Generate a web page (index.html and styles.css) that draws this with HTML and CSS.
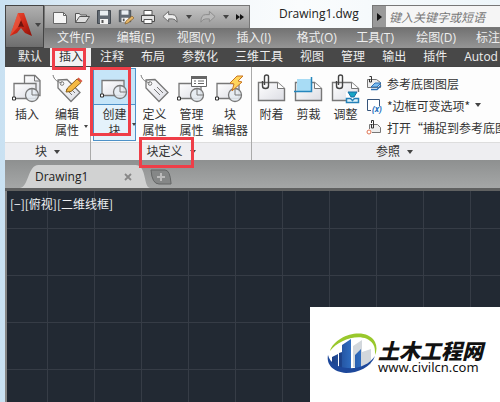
FILE: index.html
```html
<!DOCTYPE html>
<html lang="zh-CN">
<head>
<meta charset="utf-8">
<title>Drawing1.dwg</title>
<link rel="stylesheet" href="styles.css">
</head>
<body>
<svg class="defs" aria-hidden="true">
  <defs>
    <linearGradient id="red" x1="0" y1="0" x2="1" y2="1"><stop offset="0" stop-color="#f0563c"/><stop offset=".5" stop-color="#d02a18"/><stop offset="1" stop-color="#8c1008"/></linearGradient>
    <linearGradient id="paper" x1="0" y1="0" x2="1" y2="1"><stop offset="0" stop-color="#fff"/><stop offset="1" stop-color="#dcdde4"/></linearGradient>
    <linearGradient id="tower" x1="0" y1="0" x2="1" y2="0"><stop offset="0" stop-color="#1c3f86"/><stop offset="1" stop-color="#2e6cc0"/></linearGradient>
    <symbol id="block" viewBox="0 0 30 30">
      <path d="M2 9.500h22v15H2z" fill="url(#paper)" stroke="#777" stroke-width="1.300"/>
      <circle cx="20" cy="21" r="6.500" fill="#e8edf3" fill-opacity=".85" stroke="#777" stroke-width="1.300"/>
      <path d="M20 15v6h6.500" fill="none" stroke="#777"/>
      <path d="M.5 23h3v3h-3z" fill="#fff" stroke="#333"/>
    </symbol>
    <symbol id="tag" viewBox="0 0 30 30">
      <path d="M6 6l9-.5 13 13-9 9L6 14z" fill="url(#paper)" stroke="#777" stroke-width="1.300"/>
      <circle cx="10" cy="9.500" r="1.800" fill="#fff" stroke="#777"/>
      <path d="M10 9C6 8 2 6 1 1M14 15l6 6M17 13l6 6" fill="none" stroke="#777"/>
    </symbol>
    <symbol id="sheet" viewBox="0 0 30 30">
      <path d="M1.500 8.500h19l7 6v12h-26z" fill="url(#paper)" stroke="#777" stroke-width="1.400"/>
      <path d="M20.500 8.500v6h7" fill="#fff" stroke="#777"/>
    </symbol>
    <symbol id="clip" viewBox="0 0 30 30">
      <path d="M5.500 7v5q0 2.500 3 2.500t3-2.500V2.500Q11.500 1 9.500 1T7.500 3v8" fill="none" stroke="#444" stroke-width="1.400"/>
    </symbol>
    <symbol id="floppy" viewBox="0 0 16 16">
      <path d="M1.500 1.500h13v13h-13z" fill="#626a73" stroke="#434950"/>
      <path d="M4 1.500h8v5H4z" fill="#e9eef2"/><path d="M4 10h8v5H4z" fill="#f3f3f3"/><path d="M5.500 11h2v3h-2z" fill="#555"/>
    </symbol>
    <symbol id="arrow" viewBox="0 0 18 16">
      <path d="M1 7.500L7 2v3.500h4q5 0 5 8-2-3.500-5-3.500H7V13z" stroke-linejoin="round"/>
    </symbol>
  </defs>
</svg>
<div class="window">
  <header class="titlearea">
    <button class="app" aria-label="应用程序菜单">
      <svg width="24" height="26" viewBox="0 0 24 26"><path d="M9 1h6l8 23-7-3-4-5-4 5-7 3z" fill="url(#red)"/><path d="M12 8l3 7q-3-1-6 0z" fill="#6f150e"/><path d="M9 1l3 7-3 7-8 9z" fill="#ef6048" opacity=".6"/></svg>
      <i class="caret"></i>
    </button>
    <div class="titlebar">
      <div class="quick">
        <button aria-label="新建"><svg width="16" height="16"><path d="M1.500 3.500h10l3 3v8h-13z" fill="#f5f5f5" stroke="#666"/><path d="M11.500 3.500v3h3" fill="none" stroke="#666"/></svg></button>
        <button aria-label="打开"><svg width="16" height="16"><path d="M1.500 13.500v-9h4l1 1.500h6v2" fill="#eee" stroke="#555"/><path d="M1.500 13.500l4-6h10l-4 6z" fill="#ddd" stroke="#555"/></svg></button>
        <button aria-label="保存"><svg width="16" height="16"><use href="#floppy"/></svg></button>
        <button aria-label="另存为"><svg width="16" height="16"><use href="#floppy" width="14" height="14"/><path d="M7 15l1-3 6-5 2 2-6 5z" fill="#e4b567" stroke="#84602e" stroke-width=".7"/></svg></button>
        <button aria-label="打印"><svg width="16" height="16"><path d="M4 1.500h8V6H4z" fill="#fff" stroke="#555"/><path d="M1.500 6.500h13v6h-13z" fill="#e4e4e4" stroke="#4a4a4a"/><path d="M4 10.500h8v4H4z" fill="#fff" stroke="#555"/></svg></button>
        <button aria-label="放弃"><svg width="17" height="16" fill="#eee" stroke="#666"><use href="#arrow"/></svg></button>
        <button class="drop" aria-label="放弃列表"><i class="caret"></i></button>
        <button aria-label="重做"><svg class="flip" width="17" height="16" fill="#b9b9b9" stroke="#8a8a8a"><use href="#arrow"/></svg></button>
        <button class="drop" aria-label="重做列表"><i class="caret"></i></button>
        <button class="drop" aria-label="更多"><svg width="9" height="6"><path d="M0 0l4 3-4 3zM4 0l4 3-4 3z" fill="#111"/></svg></button>
      </div>
      <h1>Drawing1.dwg</h1>
      <div class="search">
        <button aria-label="展开搜索"><svg width="5" height="8"><path d="M0 0l5 4-5 4z" fill="#111"/></svg></button>
        <input type="text" aria-label="搜索" placeholder="键入关键字或短语">
      </div>
    </div>
    <nav class="menu">
      <a href="#">文件(F)</a><a href="#">编辑(E)</a><a href="#">视图(V)</a><a href="#">插入(I)</a><a href="#">格式(O)</a><a href="#">工具(T)</a><a href="#">绘图(D)</a><a href="#">标注</a>
    </nav>
  </header>
  <nav class="tabs">
    <a href="#">默认</a><a href="#" class="active">插入<span class="mark mark-tab"></span></a><a href="#">注释</a><a href="#">布局</a><a href="#">参数化</a><a href="#">三维工具</a><a href="#">视图</a><a href="#">管理</a><a href="#">输出</a><a href="#">插件</a><a href="#">Autod</a>
  </nav>
  <main>
    <div class="ribbon">
      <section class="panel panel-block">
        <div class="tools">
          <button class="tool"><svg width="30" height="30"><path d="M12.500 1.500H23l5 5v15H12.500z" fill="url(#paper)" stroke="#777" stroke-width="1.300"/><path d="M22.500 1.500V7H28" fill="none" stroke="#777"/><use href="#block"/></svg>插入</button>
          <button class="tool"><svg width="30" height="30"><use href="#tag"/><path d="M14 18l1.500-4L25 5l4 3.500-10 9z" fill="#f5b942" stroke="#8d6217"/><path d="M25 5l1.500-1.500 4 3.500L29 8.500z" fill="#d95a44"/></svg>编辑<br>属性<i class="caret corner"></i></button>
        </div>
        <h2>块<i class="caret"></i></h2>
      </section>
      <section class="panel panel-define">
        <div class="tools">
          <button class="tool selected"><svg width="30" height="30" viewBox="0 3 30 30"><use href="#block" width="30" height="30"/></svg><span>创建<br>块</span><i class="caret corner"></i><span class="mark mark-create"></span></button>
          <button class="tool"><svg width="30" height="30"><use href="#tag"/></svg>定义<br>属性</button>
          <button class="tool"><svg width="30" height="30"><use href="#block"/><path d="M14.500 2.500h15v10h-15z" fill="#fff" stroke="#666"/><path d="M14 2h16v3H14z" fill="#666"/><path d="M17 7h2M21 7h6M17 9.500h2M21 9.500h6" stroke="#666"/></svg>管理<br>属性</button>
          <button class="tool"><svg width="30" height="30"><use href="#block"/><path d="M22 2l-7 7 4 1-2 7 10-9-4-1 5-5z" fill="#ffd45b" stroke="#c97522"/></svg>块<br>编辑器</button>
        </div>
        <h2><span class="marked">块定义<span class="mark mark-title"></span></span><i class="caret"></i></h2>
      </section>
      <section class="panel panel-reference">
        <div class="tools">
          <button class="tool"><svg width="30" height="30"><use href="#sheet"/><use href="#clip"/></svg>附着</button>
          <button class="tool"><svg width="30" height="30"><use href="#sheet"/><path d="M3 5h14v12H3z" fill="#a8dcf5"/><path d="M0 17.500h17.500V3" fill="none" stroke="#2586bd" stroke-width="1.500"/></svg>剪裁</button>
          <button class="tool"><svg width="30" height="30"><use href="#sheet"/><use href="#clip"/><path d="M15 18h14v10H15z" fill="#fff"/><path d="M17 18h9l-3 5h-3z" fill="#17a5c4" stroke="#176ca5"/><path d="M15.500 24.500h4l2 2 2-2h4v4h-12z" fill="#dff4fc" stroke="#2581b8" stroke-width="1.500"/></svg>调整</button>
          <div class="list">
            <button><svg width="16" height="16"><path d="M1.500 4.500h9l4 3v5h-13z" fill="#eee" stroke="#777"/><path d="M3.500 4v3h2V1.500h-2" fill="none" stroke="#333"/><path d="M5 12l4-4h6l-4 4z" fill="#7bbdf0" stroke="#2a6fb5"/><path d="M5 14.500h6l4-4" fill="none" stroke="#2a6fb5" stroke-width="1.500"/></svg>参考底图图层</button>
            <button><svg width="16" height="16"><path d="M5 13.500H1.500V2.500h12v7" fill="#fff" stroke="#36547b"/><text x="6" y="15" class="fx">(x)</text></svg>*边框可变选项*<i class="caret"></i></button>
            <button><svg width="16" height="16"><path d="M3.500 10V5.500h8l3 3v5H6" fill="#eee" stroke="#777"/><path d="M5.500 5v4h2V1.500h-2V4" fill="none" stroke="#333"/><circle cx="3" cy="13" r="2" fill="#fff" stroke="#e07452"/></svg>打开“捕捉到参考底图</button>
          </div>
        </div>
        <h2>参照<i class="caret"></i></h2>
      </section>
    </div>
    <div class="files">
      <div class="file">
        <svg class="fileshape" viewBox="0 0 134 25" preserveAspectRatio="none"><path d="M0 25C9 24 8 0 19 0h100c12 0 8 24 15 25z"/></svg>
        <a href="#">Drawing1</a><button aria-label="关闭"><svg width="8" height="8"><path d="M1 1l6 6M7 1L1 7" stroke="#888" stroke-width="1.800"/></svg></button>
      </div>
      <button class="add" aria-label="新图形"><svg width="22" height="16"><path d="M1 1h14q5 0 6 13v1H9Q2 15 1 1z" fill="#858787" stroke="#646666"/><path d="M11 4v8M7 8h8" stroke="#bbb" stroke-width="2"/></svg></button>
    </div>
    <div class="canvas"><p>[−][俯视][二维线框]</p></div>
  </main>
</div>
<aside class="brand">
  <svg width="50" height="42" viewBox="0 0 50 42">
    <path d="M26 13l9-6v27h-9zM35 19l9-3v15l-9 5z" fill="#d2d7dc"/>
    <path d="M5 24l6-3v13l-6-3zM15 12l9-6v31l-9-1z" fill="url(#tower)"/><path d="M12 20l3-1v16h-3zM28 22l6-6v20l-6 1z" fill="url(#tower)"/>
    <path d="M3 18C8 2 39-7 48 9c2 4 2 9 0 13 0-5 0-8-2-11C37-2 12 6 3 18z" fill="#99c82c"/>
    <path d="M1 22c-2 10 6 17 18 18 12 0 25-6 29-17-6 9-17 13-28 12C10 34 3 30 1 22z" fill="#1d489b"/>
  </svg>
  <div class="brandtext"><strong>土木工程网</strong><span>www.civilcn.com</span></div>
</aside>
</body>
</html>
```
FILE: styles.css
```css
* { box-sizing: border-box; }
body {
  margin: 0;
  min-height: 100vh;
  overflow: hidden;
  position: relative;
  font-family: "Open Sans", "Noto Sans CJK SC", sans-serif;
  font-size: 12px;
  color: #333;
  background: linear-gradient(90deg, #c9e1f2, #eef5fa 30%, #fafcfd 60%, #eef6fa);
}
button { font: inherit; color: inherit; border: 0; padding: 0; background: none; }
a { color: inherit; text-decoration: none; }
h1, h2, p { margin: 0; font-weight: 400; }
svg { display: block; flex: none; overflow: visible; }
.defs { position: absolute; width: 0; height: 0; }
.caret { flex: none; border: 3px solid transparent; border-top: 4px solid #444; border-bottom: 0; }

.window { display: flex; flex-direction: column; height: 100vh; padding: 5px 0 0 5px; }
.titlearea { display: grid; grid-template-columns: 39px 1fr; grid-template-rows: 23px 20px; }
.app {
  grid-row: 1 / 3;
  display: flex;
  align-items: center;
  gap: 2px;
  padding: 0 0 4px 3px;
  border: 1px solid #444;
  background: linear-gradient(#b0b0b0, #6e6e6e);
}
.titlebar { display: flex; min-width: 0; }
.quick {
  display: flex;
  align-items: center;
  gap: 6px;
  width: 206px;
  padding-left: 7px;
  border: 1px solid #777;
  border-bottom: 0;
  background: linear-gradient(#c4c4c4, #999);
}
.quick button { flex: none; }
.quick .drop { display: flex; justify-content: center; width: 8px; }
.flip { transform: scaleX(-1); }
h1 { flex: 1; padding-left: 29px; font-size: 12px; line-height: 18px; color: #222; }
.search { display: flex; width: 128px; border: 1px solid #777; border-right: 0; }
.search button { display: flex; align-items: center; justify-content: center; width: 13px; background: #999; }
.search input {
  flex: 1;
  min-width: 0;
  padding: 0 3px;
  border: 0;
  font: italic 12px "Noto Sans CJK SC", sans-serif;
  background: #f5f5f5;
}
.search input::placeholder { color: #777; opacity: 1; }
.menu {
  display: flex;
  overflow: hidden;
  line-height: 19px;
  padding-left: 13px;
  color: #eee;
  background: linear-gradient(#727272, #959595);
}
.menu a { flex: 0 1 60px; white-space: nowrap; }
.menu a:last-child { flex-basis: 24px; }
.tabs {
  display: flex;
  flex: none;
  height: 18px;
  padding-left: 4px;
  line-height: 18px;
  color: #eee;
  background: #484848;
}
.tabs a { position: relative; flex: none; padding: 0 8px 0 9px; }
.tabs a:last-child { padding-right: 0; }
.tabs .active { color: #333; background: #f2f2f2; }

main { flex: 1; display: flex; flex-direction: column; min-height: 0; }
.ribbon { display: flex; flex: none; border-top: 1px solid #444; background: #fdfdfd; }
.panel { display: flex; flex-direction: column; }
.panel + .panel { border-left: 1px solid #aaa; }
.panel-block { flex: 0 0 85px; }
.panel-define { flex: 0 0 161px; }
.panel-reference { flex: 1; min-width: 0; }
.tools { display: flex; height: 75px; padding-left: 2px; }
.tool {
  position: relative;
  flex: 0 0 37px;
  display: flex;
  flex-direction: column;
  align-items: center;
  padding-top: 7px;
  line-height: 16px;
  text-align: center;
  white-space: nowrap;
}
.tool svg { margin-bottom: 3px; }
.panel-block .tool { flex-basis: 40px; }
.panel-define .tool:last-child { flex-basis: 40px; }
.panel-define .selected {
  flex-basis: 43px;
  height: 73px;
  margin-top: 1px;
  padding-top: 5px;
  border: 1px solid #4e91c8;
  background: linear-gradient(#c6e5f8 0 35px, #4e91c8 35px 36px, #e4f2fb 36px);
}
.corner { position: absolute; right: -1px; bottom: 14px; border-width: 3px 2px 0; }
.panel h2 {
  display: flex;
  align-items: center;
  justify-content: center;
  gap: 7px;
  height: 18px;
  font-size: 12px;
  line-height: 17px;
  border-top: 1px solid #ddd;
  background: #eeeef1;
}
.panel-reference h2 { padding-left: 37px; }
.panel-reference .tools { padding-left: 1px; overflow: hidden; }
.marked { position: relative; }
.list { display: flex; flex-direction: column; padding: 5px 0 0 2px; font-family: "Noto Sans CJK SC", sans-serif; }
.list button { display: flex; align-items: center; gap: 5px; height: 22px; white-space: nowrap; }
.fx { font: italic bold 8px "Open Sans", sans-serif; fill: #246fc0; }
.mark { position: absolute; border: 3px solid #ef3e48; pointer-events: none; }
.mark-tab { inset: 0 5px -4px 2px; z-index: 1; }
.mark-create { inset: -2px 4px 4px -4px; z-index: 1; }
.mark-title { inset: -6px -11px -8px -7px; z-index: 1; }

.files {
  display: flex;
  flex: none;
  align-items: center;
  height: 31px;
  padding: 5px 0 0 15px;
  border-bottom: 3px solid #606161;
  background: linear-gradient(#8e9090, #a5a7a7);
}
.file {
  position: relative;
  display: flex;
  align-items: center;
  justify-content: space-between;
  width: 130px;
  height: 100%;
  padding: 0 18px 0 15px;
}
.file a, .file button { position: relative; }
.file a { font-size: 12px; color: #222; }
.fileshape { position: absolute; inset: 0; width: 100%; height: 100%; fill: #d1d2d2; }
.canvas {
  flex: 1;
  border-left: 2px solid #858585;
  color: #eef0f2;
  background-color: #222933;
  background-image:
    linear-gradient(90deg, #363c46 1px, transparent 1px),
    linear-gradient(#363c46 1px, transparent 1px);
  background-size: 47px 47px;
  background-position: 40px 37px;
}
.canvas p { padding: 4px 3px; font-family: "Noto Sans CJK SC", sans-serif; line-height: 18px; }

.brand {
  position: absolute;
  right: 0;
  bottom: 0;
  z-index: 2;
  display: flex;
  align-items: flex-start;
  padding: 26px 17px 27px 17px;
  background: #fff;
}
.brandtext { display: flex; flex-direction: column; color: #111; padding: 6px 0 0 1px; }
.brandtext strong { font: italic 900 21px/22px "Noto Sans CJK SC", sans-serif; }
.brandtext span { font: 13px/13px "Noto Sans", sans-serif; }
```
